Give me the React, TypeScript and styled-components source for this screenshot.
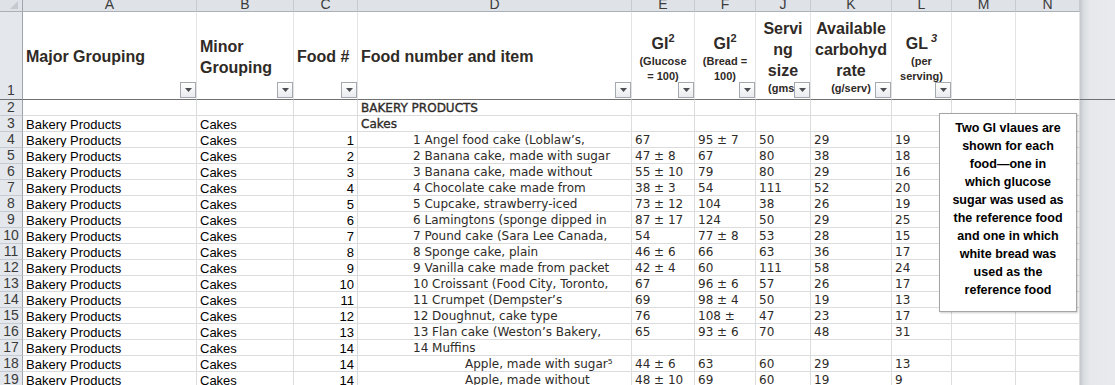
import React from 'react';
import styled, { createGlobalStyle } from 'styled-components';

const GlobalStyle = createGlobalStyle`
  html, body {
    margin: 0;
    padding: 0;
    background: #fff;
    overflow: hidden;
  }
`;

interface Column {
  key: string;
  width: number;
  filter: boolean;
}

const COLUMNS: Column[] = [
  { key: 'A', width: 174, filter: true },
  { key: 'B', width: 97, filter: true },
  { key: 'C', width: 64, filter: true },
  { key: 'D', width: 274, filter: true },
  { key: 'E', width: 63, filter: true },
  { key: 'F', width: 61, filter: true },
  { key: 'J', width: 55, filter: true },
  { key: 'K', width: 81, filter: true },
  { key: 'L', width: 60, filter: true },
  { key: 'M', width: 64, filter: false },
  { key: 'N', width: 64, filter: false },
];

interface Row {
  n: number;
  a?: string;
  b?: string;
  c?: string;
  d?: string;
  indent?: number;
  strong?: boolean;
  e?: string;
  f?: string;
  j?: string;
  k?: string;
  l?: string;
}

const ROWS: Row[] = [
  { n: 2, d: 'BAKERY PRODUCTS', strong: true },
  { n: 3, a: 'Bakery Products', b: 'Cakes', d: 'Cakes', strong: true },
  { n: 4, a: 'Bakery Products', b: 'Cakes', c: '1', d: '1 Angel food cake (Loblaw’s,', indent: 1, e: '67', f: '95 ± 7', j: '50', k: '29', l: '19' },
  { n: 5, a: 'Bakery Products', b: 'Cakes', c: '2', d: '2 Banana cake, made with sugar', indent: 1, e: '47 ± 8', f: '67', j: '80', k: '38', l: '18' },
  { n: 6, a: 'Bakery Products', b: 'Cakes', c: '3', d: '3 Banana cake, made without', indent: 1, e: '55 ± 10', f: '79', j: '80', k: '29', l: '16' },
  { n: 7, a: 'Bakery Products', b: 'Cakes', c: '4', d: '4 Chocolate cake made from', indent: 1, e: '38 ± 3', f: '54', j: '111', k: '52', l: '20' },
  { n: 8, a: 'Bakery Products', b: 'Cakes', c: '5', d: '5 Cupcake, strawberry-iced', indent: 1, e: '73 ± 12', f: '104', j: '38', k: '26', l: '19' },
  { n: 9, a: 'Bakery Products', b: 'Cakes', c: '6', d: '6 Lamingtons (sponge dipped in', indent: 1, e: '87 ± 17', f: '124', j: '50', k: '29', l: '25' },
  { n: 10, a: 'Bakery Products', b: 'Cakes', c: '7', d: '7 Pound cake (Sara Lee Canada,', indent: 1, e: '54', f: '77 ± 8', j: '53', k: '28', l: '15' },
  { n: 11, a: 'Bakery Products', b: 'Cakes', c: '8', d: '8 Sponge cake, plain', indent: 1, e: '46 ± 6', f: '66', j: '63', k: '36', l: '17' },
  { n: 12, a: 'Bakery Products', b: 'Cakes', c: '9', d: '9 Vanilla cake made from packet', indent: 1, e: '42 ± 4', f: '60', j: '111', k: '58', l: '24' },
  { n: 13, a: 'Bakery Products', b: 'Cakes', c: '10', d: '10 Croissant (Food City, Toronto,', indent: 1, e: '67', f: '96 ± 6', j: '57', k: '26', l: '17' },
  { n: 14, a: 'Bakery Products', b: 'Cakes', c: '11', d: '11 Crumpet (Dempster’s', indent: 1, e: '69', f: '98 ± 4', j: '50', k: '19', l: '13' },
  { n: 15, a: 'Bakery Products', b: 'Cakes', c: '12', d: '12 Doughnut, cake type', indent: 1, e: '76', f: '108 ±', j: '47', k: '23', l: '17' },
  { n: 16, a: 'Bakery Products', b: 'Cakes', c: '13', d: '13 Flan cake (Weston’s Bakery,', indent: 1, e: '65', f: '93 ± 6', j: '70', k: '48', l: '31' },
  { n: 17, a: 'Bakery Products', b: 'Cakes', c: '14', d: '14 Muffins', indent: 1 },
  { n: 18, a: 'Bakery Products', b: 'Cakes', c: '14', d: 'Apple, made with sugar⁵', indent: 2, e: '44 ± 6', f: '63', j: '60', k: '29', l: '13' },
  { n: 19, a: 'Bakery Products', b: 'Cakes', c: '14', d: 'Apple, made without', indent: 2, e: '48 ± 10', f: '69', j: '60', k: '19', l: '9' },
];

const INDENTS = [3, 55, 107];

const FilterButton: React.FC = () => (
  <Filter>
    <svg width="7" height="4" viewBox="0 0 7 4">
      <polygon points="0,0 7,0 3.5,4" fill="#4a4d52" />
    </svg>
  </Filter>
);

const headerContent = (key: string): React.ReactNode => {
  switch (key) {
    case 'A':
      return <Big>Major Grouping</Big>;
    case 'B':
      return <Big>Minor<br />Grouping</Big>;
    case 'C':
      return <Big>Food #</Big>;
    case 'D':
      return <Big>Food number and item</Big>;
    case 'E':
      return (
        <>
          <Big $raised>GI<Sup>2</Sup></Big>
          <Small>(Glucose<br />= 100)</Small>
        </>
      );
    case 'F':
      return (
        <>
          <Big $raised>GI<Sup>2</Sup></Big>
          <Small>(Bread =<br />100)</Small>
        </>
      );
    case 'J':
      return (
        <>
          <Big>Servi<br />ng<br />size</Big>
          <Small>(gms)</Small>
        </>
      );
    case 'K':
      return (
        <>
          <Big>Available<br />carbohyd<br />rate</Big>
          <Small>(g/serv)</Small>
        </>
      );
    case 'L':
      return (
        <>
          <Big $raised>GL<Sup $italic> 3</Sup></Big>
          <Small>(per<br />serving)</Small>
        </>
      );
    default:
      return null;
  }
};

const centered = ['E', 'F', 'J', 'K', 'L'];

export default function App() {
  return (
    <>
      <GlobalStyle />
      <Sheet>
        <Grid>
          <Corner>
            <svg width="8" height="8" viewBox="0 0 8 8">
              <polygon points="8,0 8,8 0,8" fill="#c5cad0" />
            </svg>
          </Corner>
          {COLUMNS.map((col) => (
            <ColHeader key={col.key}>
              <span>{col.key}</span>
            </ColHeader>
          ))}
          <Gutter />

          <RowHeader $bottom $freeze>1</RowHeader>
          {COLUMNS.map((col) => (
            <HeadCell key={col.key} $center={centered.includes(col.key)}>
              {headerContent(col.key)}
              {col.filter && <FilterButton />}
            </HeadCell>
          ))}
          <Gutter $freeze />

          {ROWS.map((row) => (
            <React.Fragment key={row.n}>
              <RowHeader>{row.n}</RowHeader>
              <Cell>{row.a}</Cell>
              <Cell>{row.b}</Cell>
              <Cell $align="right">{row.c}</Cell>
              <Cell $font="verdana" $strong={row.strong} $indent={INDENTS[row.indent ?? 0]}>
                {row.d}
              </Cell>
              <Cell $font="verdana">{row.e}</Cell>
              <Cell $font="verdana">{row.f}</Cell>
              <Cell $font="verdana">{row.j}</Cell>
              <Cell $font="verdana">{row.k}</Cell>
              <Cell $font="verdana">{row.l}</Cell>
              <Cell />
              <Cell />
              <Gutter />
            </React.Fragment>
          ))}
        </Grid>

        <NoteBox>
          Two GI vlaues are<br />
          shown for each<br />
          food—one in<br />
          which glucose<br />
          sugar was used as<br />
          the reference food<br />
          and one in which<br />
          white bread was<br />
          used as the<br />
          reference food
        </NoteBox>
      </Sheet>
    </>
  );
}

const Sheet = styled.div`
  position: relative;
  width: 1115px;
  height: 385px;
  overflow: hidden;
  background: #fff;
`;

const Grid = styled.div`
  display: grid;
  grid-template-columns: 23px ${COLUMNS.map((c) => `${c.width}px`).join(' ')} 1fr;
  grid-template-rows: 12px 88px repeat(${ROWS.length}, 16px);
`;

const Corner = styled.div`
  box-sizing: border-box;
  background: #dfe3e8;
  border-right: 1px solid #9fa5ad;
  border-bottom: 1px solid #a9b0b8;
  display: flex;
  align-items: flex-end;
  justify-content: flex-end;
  padding: 0 4px 2px 0;
`;

const ColHeader = styled.div`
  box-sizing: border-box;
  background: #dfe3e8;
  border-right: 1px solid #c6cbd1;
  border-bottom: 1px solid #a9b0b8;
  overflow: hidden;
  display: flex;
  align-items: flex-end;
  justify-content: center;
  font-family: 'Liberation Sans', Arial, sans-serif;
  font-size: 14px;
  line-height: 14px;
  color: #3b3b3b;
`;

const Gutter = styled.div<{ $freeze?: boolean }>`
  box-sizing: border-box;
  background: linear-gradient(to right, #c4c8cd 0, #dadde1 4px, #e6e8eb 10px, #e8eaed 100%);
  border-bottom: ${({ $freeze }) => ($freeze ? '1px solid #707070' : 'none')};
`;

const RowHeader = styled.div<{ $bottom?: boolean; $freeze?: boolean }>`
  box-sizing: border-box;
  background: #e4e7eb;
  border-right: 1px solid #9fa5ad;
  border-bottom: 1px solid ${({ $freeze }) => ($freeze ? '#707070' : '#c6cbd1')};
  display: flex;
  justify-content: center;
  align-items: ${({ $bottom }) => ($bottom ? 'flex-end' : 'center')};
  padding-bottom: ${({ $bottom }) => ($bottom ? '1px' : '0')};
  font-family: 'Liberation Sans', Arial, sans-serif;
  font-size: 14px;
  line-height: 15px;
  color: #3b3b3b;
`;

const HeadCell = styled.div<{ $center?: boolean }>`
  position: relative;
  box-sizing: border-box;
  border-right: 1px solid #e3e3e3;
  border-bottom: 1px solid #707070;
  display: flex;
  flex-direction: column;
  justify-content: center;
  align-items: ${({ $center }) => ($center ? 'center' : 'flex-start')};
  text-align: ${({ $center }) => ($center ? 'center' : 'left')};
  padding: 2px 3px 0;
  overflow: hidden;
  font-family: 'Liberation Sans', Arial, sans-serif;
  color: #2f2a26;
  white-space: nowrap;
`;

const Big = styled.div<{ $raised?: boolean }>`
  font-size: 16px;
  font-weight: bold;
  line-height: 21px;
  padding-top: ${({ $raised }) => ($raised ? '4px' : '0')};
`;

const Small = styled.div`
  font-size: 11px;
  font-weight: bold;
  line-height: 15px;
`;

const Sup = styled.sup<{ $italic?: boolean }>`
  font-size: 11px;
  line-height: 0;
  vertical-align: 7px;
  font-style: ${({ $italic }) => ($italic ? 'italic' : 'normal')};
  white-space: pre;
`;

const Filter = styled.div`
  position: absolute;
  right: 0;
  bottom: 1px;
  box-sizing: border-box;
  width: 16px;
  height: 16px;
  border: 1px solid #a4a9b0;
  background: linear-gradient(#ffffff, #e9ebee);
  display: flex;
  align-items: center;
  justify-content: center;
`;

const Cell = styled.div<{
  $align?: 'left' | 'right';
  $font?: 'arial' | 'verdana';
  $indent?: number;
  $strong?: boolean;
}>`
  box-sizing: border-box;
  border-right: 1px solid #dadcdd;
  border-bottom: 1px solid #dadcdd;
  padding: 1px 3px 0 ${({ $indent }) => $indent ?? 3}px;
  text-align: ${({ $align }) => $align ?? 'left'};
  white-space: nowrap;
  overflow: hidden;
  font-family: ${({ $font }) =>
    $font === 'verdana' ? "'DejaVu Sans', Verdana, sans-serif" : "'Liberation Sans', Arial, sans-serif"};
  font-size: ${({ $font }) => ($font === 'verdana' ? '12px' : '13px')};
  line-height: 15px;
  color: ${({ $font }) => ($font === 'verdana' ? '#2e2b28' : '#000')};
  -webkit-text-stroke: ${({ $strong }) => ($strong ? '0.35px #2e2b28' : '0')};
`;

const NoteBox = styled.div`
  position: absolute;
  left: 939px;
  top: 113px;
  width: 138px;
  height: 199px;
  box-sizing: border-box;
  padding-top: 5px;
  border: 1px solid #a5a5a5;
  background: #fff;
  box-shadow: 1px 1px 2px rgba(0, 0, 0, 0.2);
  font-family: 'Liberation Sans', Arial, sans-serif;
  font-size: 12.5px;
  font-weight: bold;
  line-height: 18px;
  text-align: center;
  color: #000;
`;
